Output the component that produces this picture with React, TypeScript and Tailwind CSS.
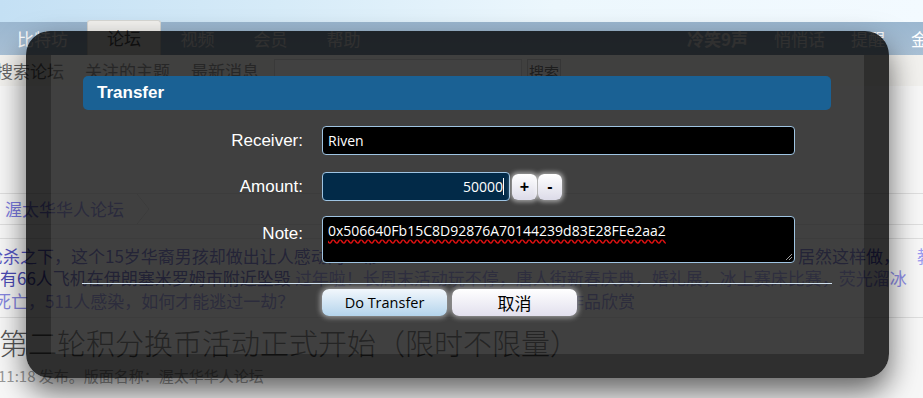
const cjk = "font-['Noto_Sans_CJK_SC',sans-serif]";

function ForumPage() {
  return (
    <div className="flex flex-col">
      {/* sky strip above the menu */}
      <div className="h-[22px] bg-[linear-gradient(90deg,#c4e0f4_0%,#d6ebf8_30%,#ecf7fd_60%,#f3faff_100%)]" />

      <nav className="flex h-[33px] items-center bg-gradient-to-b from-[#9bb7d0] to-[#a9c0d5] text-[17px] text-white">
        <div className="flex h-full w-[687px] shrink-0 items-center">
          <span className="pl-[17px] pr-[19px]">比特坊</span>
          <span className="flex h-[35px] w-[74px] items-center justify-center self-end rounded-t-[3px] border border-b-0 border-[#d8d8d4] bg-[#f4f3f0] text-[#555]">
            论坛
          </span>
          <span className="w-[73px] text-center">视频</span>
          <span className="w-[73px] text-center">会员</span>
          <span className="w-[73px] text-center">帮助</span>
        </div>
        <div className="flex shrink-0 gap-[26px] whitespace-nowrap">
          <span className="font-bold">冷笑9声</span>
          <span>悄悄话</span>
          <span>提醒</span>
          <span>金币</span>
        </div>
      </nav>

      <div className="flex h-[31px] items-start whitespace-nowrap bg-[#f2f1ee] text-[17px] leading-[31px] text-[#666]">
        <span className="ml-[-4px]">搜索论坛</span>
        <span className="ml-[21px]">关注的主题</span>
        <span className="ml-[21px]">最新消息</span>
        <div className="ml-[15px] mt-[4px] h-[26px] w-[248px] shrink-0 border border-[#cfcfcf] bg-white" />
        <button className="ml-[5px] mt-[4px] h-[26px] w-[34px] shrink-0 border border-[#bdbdbd] bg-[#efefef] text-[15px] leading-[22px] text-[#333]">
          搜索
        </button>
      </div>

      <div className="h-[107px]" />

      <div className="flex h-[32px] items-center border-y border-[#dedede]">
        <span className="pl-[5px] text-[17px] text-[#7a7ae0]">渥太华华人论坛</span>
        <svg className="ml-[12px]" width="14" height="30" viewBox="0 0 14 30">
          <polyline points="1,0 13,15 1,30" fill="none" stroke="#d8d8d8" strokeWidth="1" />
        </svg>
      </div>

      <div className="mt-[13px] border-t border-[#dedede] pb-[4px] pt-[6px] text-[17px] leading-[22px]">
        <div className="flex h-[22px] items-center whitespace-nowrap">
          <div className="ml-[-14px] w-[812px] shrink-0 overflow-hidden text-[#5656c4]">
            枪杀之下，这个15岁华裔男孩却做出让人感动的一幕
          </div>
          <span className="text-[#5656c4]">居然这样做，</span>
          <span className="ml-[17px] text-[#9b9bef]">教育局</span>
        </div>
        <div className="flex h-[22px] items-center whitespace-nowrap">
          <span className="text-[#4a4ab4]">有66人飞机在伊朗塞米罗姆市附近坠毁</span>
          <span className="ml-[4px] text-[#8f8fea]">
            过年啦！长周末活动玩不停，唐人街新春庆典，婚礼展，冰上赛床比赛，荧光溜冰
          </span>
        </div>
        <div className="flex h-[24px] items-center whitespace-nowrap leading-[24px]">
          <div className="ml-[-6px] w-[573px] shrink-0 text-[#8585de]">死亡，511人感染，如何才能逃过一劫？</div>
          <span className="text-[#8585de]">作品欣赏</span>
        </div>
      </div>

      <div className="border-t border-[#dedede] pt-[6px]">
        <div className="ml-[-1px] whitespace-nowrap text-[29px] font-light leading-[36px] text-[#555]">
          第二轮积分换币活动正式开始（限时不限量）
        </div>
        <div className="ml-[-2px] mt-[6px] whitespace-nowrap text-[15px] leading-[20px] text-[#999]">
          11:18 发布。版面名称：渥太华华人论坛
        </div>
      </div>
    </div>
  );
}

function SmallButton({ label, width }: { label: string; width: string }) {
  return (
    <button
      className={`flex h-[26px] ${width} items-center justify-center rounded-[6px] bg-gradient-to-b from-white to-[#dcdbe8] font-['Liberation_Sans',sans-serif] text-[16px] font-bold text-black shadow-[0_0_4px_2px_rgba(255,255,255,0.5)]`}
    >
      {label}
    </button>
  );
}

function TransferDialog() {
  const label = "flex w-[220px] shrink-0 justify-end text-[17px] text-white";
  return (
    <div className="absolute left-[26px] top-[31px] h-[347px] w-[863px] rounded-[24px] bg-[rgba(0,0,0,0.81)] pl-[25px] pt-[24px] shadow-[0_14px_30px_rgba(0,0,0,0.6)]">
      <div className="h-[299px] w-[813px] bg-[rgba(255,255,255,0.085)] pl-[32px] pt-[21px] font-['Liberation_Sans',sans-serif]">
        <div className="flex h-[34px] w-[748px] items-center rounded-[5px] bg-[#1a6194] pl-[14px] text-[17px] font-bold text-white">
          Transfer
        </div>

        <div className="mt-[16px] flex items-center gap-[19px]">
          <label className={label}>Receiver:</label>
          <input
            readOnly
            value="Riven"
            className="h-[29px] w-[473px] rounded-[4px] border border-[#9fc4e2] bg-black px-[5px] font-['Open_Sans',sans-serif] text-[14px] text-white outline-none"
          />
        </div>

        <div className="mt-[17px] flex items-center gap-[19px]">
          <label className={label}>Amount:</label>
          <div className="flex items-center">
            <div className="flex h-[29px] w-[188px] items-center justify-end rounded-[4px] border border-[#9fc4e2] bg-[#022a48] pr-[5px] font-['Open_Sans',sans-serif] text-[14px] text-white">
              50000
              <span className="h-[17px] w-px bg-white" />
            </div>
            <div className="ml-[2px] flex gap-[1px]">
              <SmallButton label="+" width="w-[25px]" />
              <SmallButton label="-" width="w-[24px]" />
            </div>
          </div>
        </div>

        <div className="mt-[15px] flex items-start gap-[19px]">
          <label className={`${label} pt-[5px]`}>Note:</label>
          <div className="relative h-[47px] w-[473px] rounded-[4px] border border-[#9fc4e2] bg-black px-[5px] pt-[4px] font-['Open_Sans',sans-serif] text-[14px] leading-[20px] text-white">
            <span className="underline decoration-[#e01010] decoration-wavy underline-offset-[3px]">
              0x506640Fb15C8D92876A70144239d83E28FEe2aa2
            </span>
            <svg className="absolute bottom-[1px] right-[1px]" width="9" height="9" viewBox="0 0 9 9">
              <line x1="8" y1="2" x2="2" y2="8" stroke="#9a9a9a" strokeWidth="1" />
              <line x1="8" y1="5" x2="5" y2="8" stroke="#9a9a9a" strokeWidth="1" />
            </svg>
          </div>
        </div>

        <div className="ml-[-1px] mt-[20px] h-px w-[750px] bg-[#cfe0ef]" />

        <div className="mt-[5px] flex gap-[5px] pl-[239px]">
          <button className="h-[27px] w-[125px] rounded-[7px] bg-gradient-to-b from-[#f2f7fc] to-[#b4d4ec] font-['Open_Sans',sans-serif] text-[14.5px] text-black shadow-[0_0_5px_2px_rgba(255,255,255,0.45)]">
            Do Transfer
          </button>
          <button className={`h-[27px] w-[125px] rounded-[7px] bg-gradient-to-b from-white to-[#e2e0ee] ${cjk} text-[17px] leading-none text-black shadow-[0_0_5px_2px_rgba(255,255,255,0.45)]`}>
            取消
          </button>
        </div>
      </div>
    </div>
  );
}

export default function App() {
  return (
    <div className={`relative h-[398px] w-[923px] overflow-hidden bg-[#f7f7f7] ${cjk}`}>
      <ForumPage />
      <TransferDialog />
    </div>
  );
}
